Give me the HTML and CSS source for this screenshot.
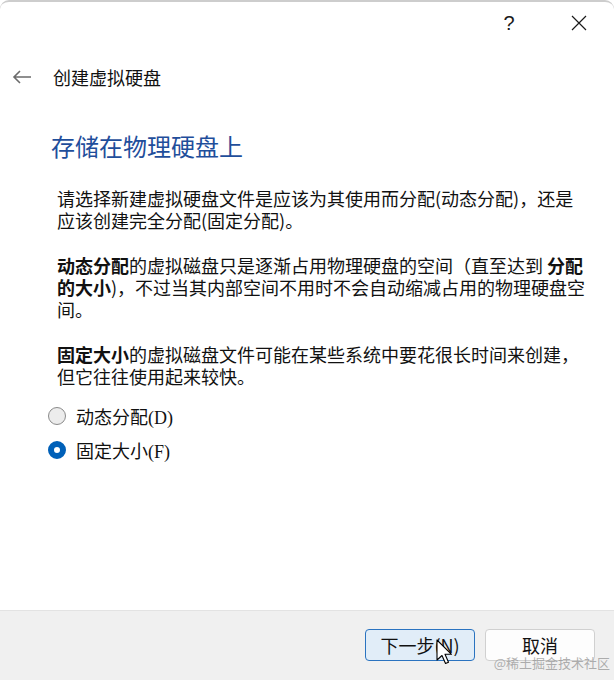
FILE: index.html
```html
<!DOCTYPE html>
<html lang="zh-CN">

<head>
    <meta charset="UTF-8">
    <title>创建虚拟硬盘</title>
    <link rel="stylesheet" href="styles.css">
</head>

<body>
    <div class="window">
        <div class="titlebar">
            <span class="tb-btn help">?</span>
            <span class="tb-btn close">
                <svg width="16" height="16" viewBox="0 0 16 16"><path d="M1 1 L15 15 M15 1 L1 15" stroke="#1a1a1a" stroke-width="1.2" fill="none"/></svg>
            </span>
        </div>

        <div class="nav">
            <span class="back">
                <svg width="20" height="14" viewBox="0 0 20 14"><path d="M19 7 H2 M8 1 L2 7 L8 13" stroke="#6b6b6b" stroke-width="1.6" fill="none"/></svg>
            </span>
            <span class="nav-title">创建虚拟硬盘</span>
        </div>

        <div class="content">
            <h1 class="heading">存储在物理硬盘上</h1>

            <p class="text">请选择新建虚拟硬盘文件是应该为其使用而分配(动态分配)，还是应该创建完全分配(固定分配)。</p>
            <p class="text"><b>动态分配</b>的虚拟磁盘只是逐渐占用物理硬盘的空间（直至达到 <b>分配的大小</b>)，不过当其内部空间不用时不会自动缩减占用的物理硬盘空间。</p>
            <p class="text"><b>固定大小</b>的虚拟磁盘文件可能在某些系统中要花很长时间来创建，但它往往使用起来较快。</p>

            <div class="options">
                <label class="option"><input type="radio" name="kind"><span>动态分配(D)</span></label>
                <label class="option"><input type="radio" name="kind" checked><span>固定大小(F)</span></label>
            </div>
        </div>

        <div class="footer">
            <button class="btn primary">下一步(N)</button>
            <button class="btn">取消</button>
        </div>
    </div>

    <!-- 鼠标指针 -->
    <svg class="cursor" width="20" height="28" viewBox="0 0 20 28">
        <path d="M1 1 L1 21 L6 16.5 L9.5 24.5 L12.5 23.2 L9 15.3 L15.5 15.3 Z" fill="#fff" stroke="#000" stroke-width="1.1" stroke-linejoin="round"/>
    </svg>
    <div class="watermark">@稀土掘金技术社区</div>
</body>

</html>
```

FILE: styles.css
```css
* {
    margin: 0;
    padding: 0;
    box-sizing: border-box;
}

html,
body {
    height: 100%;
    background: #fff;
}

body {
    font-family: "Noto Sans CJK SC", "Liberation Sans", sans-serif;
    color: #111;
    overflow: hidden;
    position: relative;
}

.window {
    height: 100%;
    display: flex;
    flex-direction: column;
    border-top: 2px solid #cdcdcd;
    border-radius: 9px 9px 0 0;
    background: #fff;
}

.titlebar {
    height: 42px;
    display: flex;
    justify-content: flex-end;
    align-items: center;
    padding-right: 0;
}

.tb-btn {
    width: 70px;
    height: 42px;
    display: flex;
    align-items: center;
    justify-content: center;
    color: #1a1a1a;
}

.help {
    font-family: "Liberation Sans", sans-serif;
    font-size: 20px;
    font-weight: 300;
}

.nav {
    margin-top: 17px;
    height: 32px;
    display: flex;
    align-items: center;
    padding-left: 12px;
}

.back {
    display: flex;
    width: 41px;
}

.nav-title {
    font-size: 18px;
    line-height: 32px;
    color: #111;
}

.content {
    padding: 0 25px 0 57px;
}

.heading {
    margin: 38px 0 0 -6px;
    font-size: 24px;
    font-weight: 400;
    line-height: 30px;
    color: #1f4e9b;
}

.text {
    font-size: 18px;
    line-height: 22px;
    margin-top: 23px;
}

.heading + .text {
    margin-top: 26px;
}

.text b {
    font-weight: 700;
}

.options {
    margin-top: 16px;
    display: flex;
    flex-direction: column;
    gap: 9px;
}

.option {
    display: flex;
    align-items: center;
    height: 25px;
    margin-left: -9px;
    font-family: "Liberation Serif", "Noto Sans CJK SC", serif;
    font-size: 18px;
}

.option input {
    appearance: none;
    width: 18px;
    height: 18px;
    border-radius: 50%;
    border: 1px solid #8a8a8a;
    background: #ececec;
    margin-right: 10px;
}

.option input:checked {
    border: 6px solid #0060b8;
    background: #fff;
}

.footer {
    margin-top: auto;
    height: 70px;
    background: #f0f0f0;
    border-top: 1px solid #e3e3e3;
    display: flex;
    justify-content: flex-end;
    align-items: flex-start;
    gap: 10px;
    padding: 18px 19px 0 0;
}

.btn {
    width: 110px;
    height: 32px;
    border-radius: 4px;
    border: 1px solid #d0d0d0;
    background: #fdfdfd;
    font-family: "Noto Sans CJK SC", "Liberation Sans", sans-serif;
    font-size: 18px;
    color: #111;
}

.btn.primary {
    border-color: #2a73c0;
    background: #e1edf8;
}

.cursor {
    position: absolute;
    left: 436px;
    top: 639px;
}

.watermark {
    position: absolute;
    right: 4px;
    bottom: 8px;
    font-size: 13px;
    color: rgba(150, 150, 150, 0.75);
    font-family: "Noto Sans CJK SC", sans-serif;
}
```
